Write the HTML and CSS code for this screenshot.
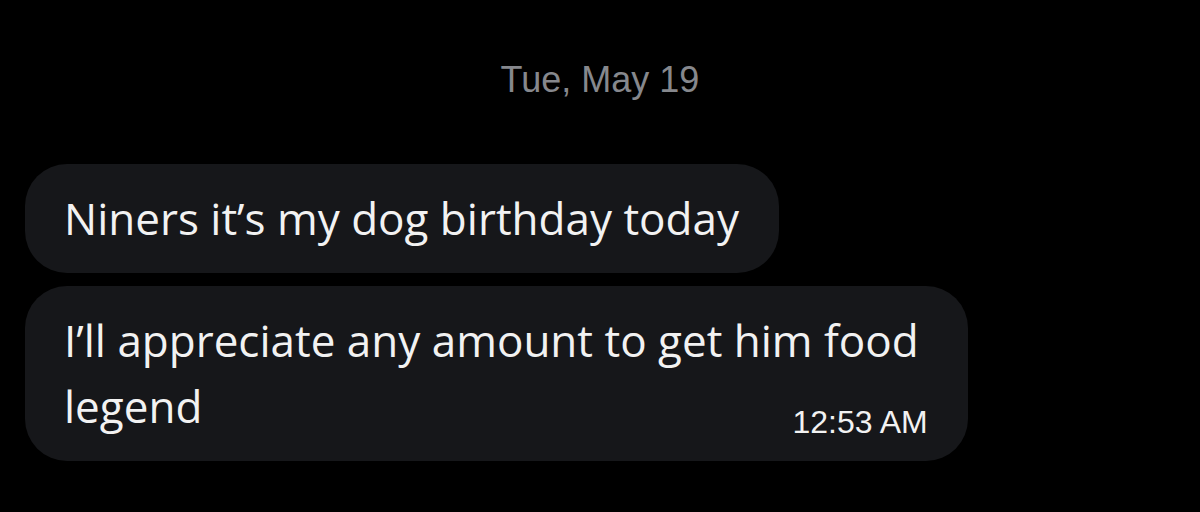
FILE: index.html
```html
<!DOCTYPE html>
<html>
<head>
<meta charset="utf-8">
<link rel="stylesheet" href="styles.css">
</head>
<body>
<div class="chat">
  <div class="date">Tue, May 19</div>
  <div class="messages">
    <div class="bubble">
      <div class="text">Niners it’s my dog birthday today</div>
    </div>
    <div class="bubble last">
      <div class="text">I’ll appreciate any amount to get him food<br>legend</div>
      <div class="time">12:53 AM</div>
    </div>
  </div>
</div>
</body>
</html>
```
FILE: styles.css
```css
html, body {
  margin: 0;
  padding: 0;
  background: #000;
  width: 1200px;
  height: 512px;
  overflow: hidden;
}
.chat {
  display: flex;
  flex-direction: column;
  padding-top: 58px;
}
.date {
  font-family: "Liberation Sans", Arial, sans-serif;
  font-size: 36px;
  color: #86888d;
  text-align: center;
  line-height: 44px;
}
.messages {
  display: flex;
  flex-direction: column;
  align-items: flex-start;
  gap: 13px;
  padding-left: 25px;
  margin-top: 62px;
}
.bubble {
  background: #16171a;
  border-radius: 42px;
  padding: 21px 40px 22px 39px;
  color: #f2f2f2;
  font-family: "Open Sans", sans-serif;
  font-size: 44px;
  line-height: 66px;
}
.bubble.last {
  padding-right: 49px;
  padding-bottom: 22px;
  display: flex;
  flex-direction: column;
}
.time {
  align-self: flex-end;
  font-family: "Liberation Sans", Arial, sans-serif;
  font-size: 32px;
  line-height: 30px;
  margin-top: -32px;
  margin-bottom: 2px;
  margin-right: -9px;
}
```
